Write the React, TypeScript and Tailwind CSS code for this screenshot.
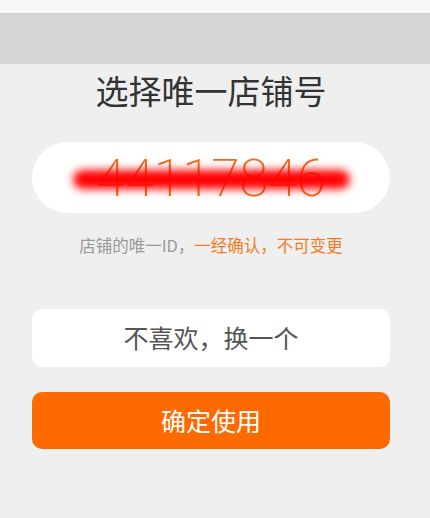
export default function App() {
  return (
    <div
      className="w-[430px] h-[518px] bg-[#efefef] flex flex-col overflow-hidden"
      style={{ fontFamily: '"Noto Sans CJK SC", "Noto Sans", sans-serif' }}
    >
      <div className="h-[14px] bg-[#f8f8f8] border-b border-[#d0d0d0] shrink-0" />
      <div className="h-[50px] bg-[#d6d6d6] shrink-0" />

      <div className="ml-[32px] w-[358px] flex flex-col">
        <h1 className="mt-[4px] text-center text-[33px] leading-[44px] text-[#333]">选择唯一店铺号</h1>

        <div className="mt-[30px] h-[71px] rounded-full bg-white relative flex items-center justify-center">
          <span
            className="text-[52px] text-[#f06a1c] leading-none mt-[2px]"
            style={{ fontFamily: 'Roboto, "Liberation Sans", sans-serif', fontWeight: 200 }}
          >
            44117846
          </span>
          <div className="absolute left-[41px] right-[40px] top-[28px] h-[19px] rounded-full bg-[#ff0000] blur-[4px]" />
        </div>

        <p className="mt-[21px] text-center text-[16.5px] leading-[22px] text-[#999]">
          店铺的唯一ID，<span className="text-[#f37a22]">一经确认，不可变更</span>
        </p>

        <button className="mt-[53px] h-[58px] rounded-[10px] bg-white text-[25px] text-[#555]">
          不喜欢，换一个
        </button>

        <button className="mt-[25px] h-[57px] rounded-[10px] bg-[#ff6a00] text-[25px] text-white">
          确定使用
        </button>
      </div>
    </div>
  );
}
